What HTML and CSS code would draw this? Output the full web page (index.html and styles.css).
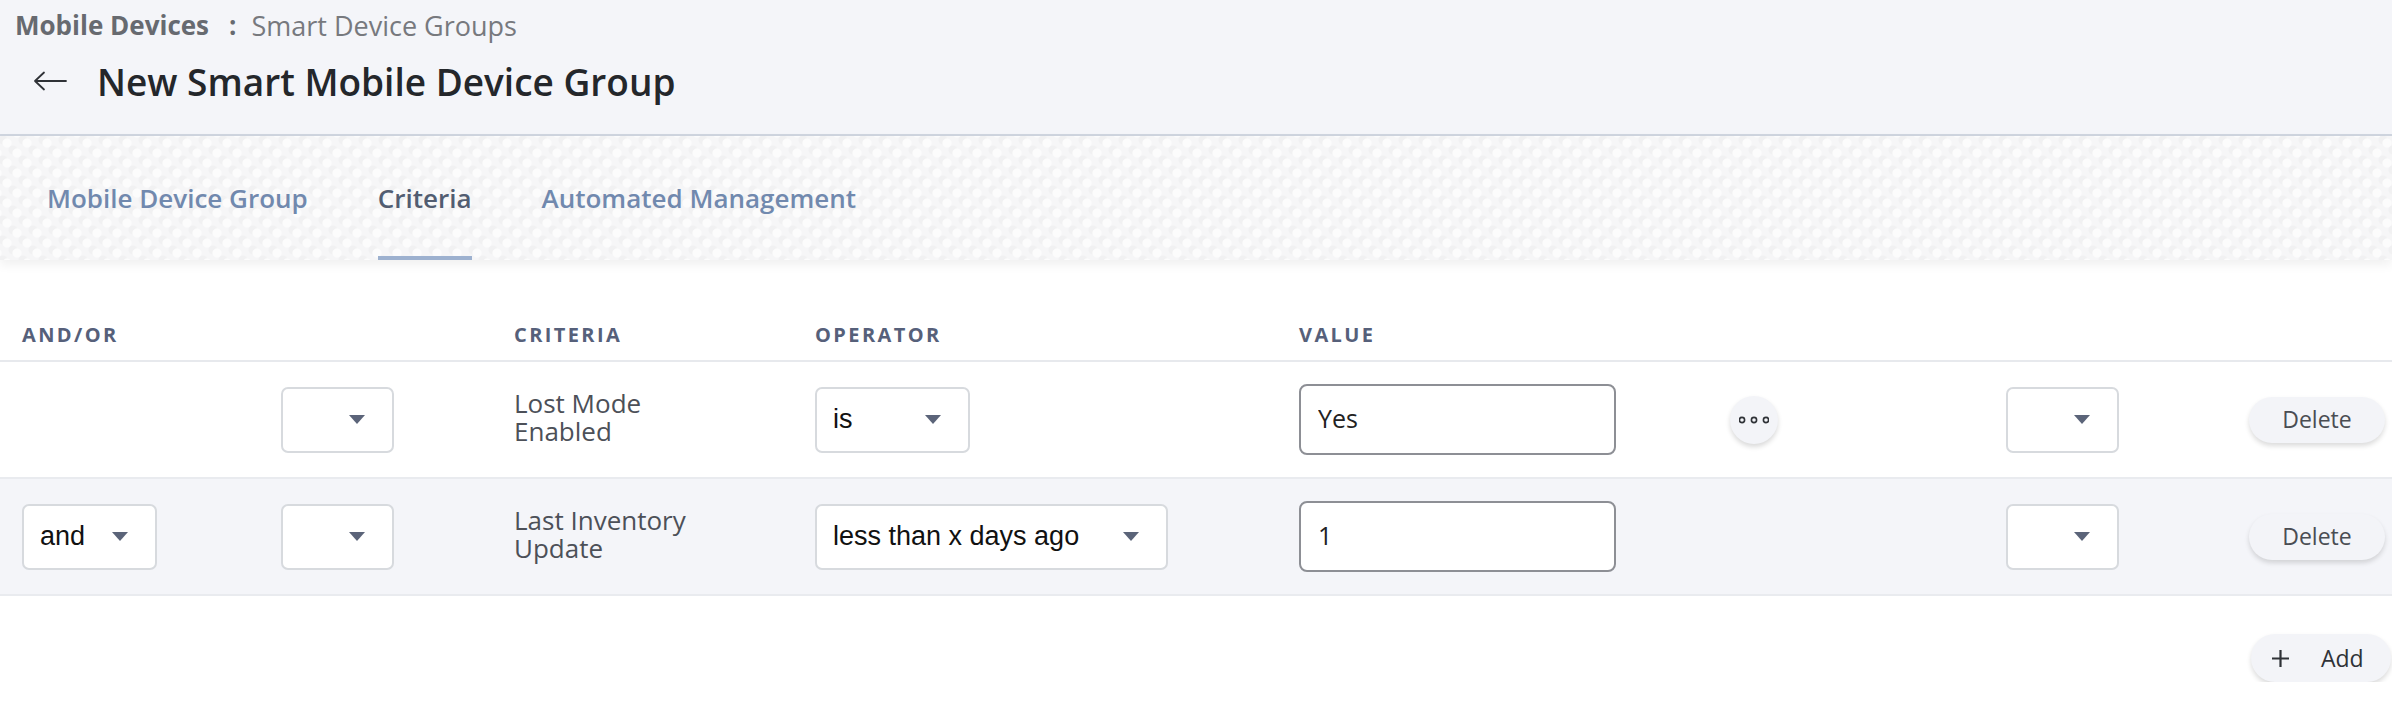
FILE: index.html
```html
<!DOCTYPE html>
<html lang="en">
<head>
    <meta charset="UTF-8">
    <meta name="viewport" content="width=device-width, initial-scale=1.0">
    <title>New Smart Mobile Device Group</title>
    <link rel="stylesheet" href="styles.css">
</head>
<body>
    <header class="page-header">
        <div class="breadcrumb">
            <span class="crumb-parent">Mobile Devices</span>
            <span class="crumb-sep">:</span>
            <span class="crumb-current">Smart Device Groups</span>
        </div>
        <div class="title-row">
            <button class="back-btn" aria-label="Back">
                <svg width="34" height="20" viewBox="0 0 34 20">
                    <path d="M33 10H2M11 1.5L2 10l9 8.5" fill="none" stroke="#2f3237" stroke-width="1.8" stroke-linecap="round" stroke-linejoin="round"/>
                </svg>
            </button>
            <h1>New Smart Mobile Device Group</h1>
        </div>
    </header>

    <nav class="tabs">
        <a href="#" class="tab">Mobile Device Group</a>
        <a href="#" class="tab active">Criteria</a>
        <a href="#" class="tab">Automated Management</a>
    </nav>

    <main class="criteria">
        <div class="criteria-grid criteria-head">
            <div>AND/OR</div>
            <div></div>
            <div>CRITERIA</div>
            <div>OPERATOR</div>
            <div>VALUE</div>
            <div></div>
            <div></div>
            <div></div>
        </div>

        <div class="criteria-grid criteria-row">
            <div></div>
            <div><div class="select select-paren"><span class="select-value"></span><span class="caret"></span></div></div>
            <div class="criteria-name">Lost Mode Enabled</div>
            <div><div class="select select-is"><span class="select-value">is</span><span class="caret"></span></div></div>
            <div><input class="value-input" type="text" value="Yes"></div>
            <div>
                <button class="more-btn" aria-label="More">
                    <svg width="30" height="8" viewBox="0 0 30 8">
                        <circle cx="3" cy="4" r="2.6" fill="none" stroke="#2f3237" stroke-width="1.6"/>
                        <circle cx="15" cy="4" r="2.6" fill="none" stroke="#2f3237" stroke-width="1.6"/>
                        <circle cx="27" cy="4" r="2.6" fill="none" stroke="#2f3237" stroke-width="1.6"/>
                    </svg>
                </button>
            </div>
            <div><div class="select select-paren"><span class="select-value"></span><span class="caret"></span></div></div>
            <div><button class="pill delete-btn">Delete</button></div>
        </div>

        <div class="criteria-grid criteria-row alt">
            <div><div class="select select-andor"><span class="select-value">and</span><span class="caret"></span></div></div>
            <div><div class="select select-paren"><span class="select-value"></span><span class="caret"></span></div></div>
            <div class="criteria-name">Last Inventory Update</div>
            <div><div class="select select-days"><span class="select-value">less than x days ago</span><span class="caret"></span></div></div>
            <div><input class="value-input" type="text" value="1"></div>
            <div></div>
            <div><div class="select select-paren"><span class="select-value"></span><span class="caret"></span></div></div>
            <div><button class="pill delete-btn">Delete</button></div>
        </div>

        <div class="criteria-foot">
            <button class="pill add-btn">
                <svg width="17" height="17" viewBox="0 0 17 17">
                    <path d="M8.5 0v17M0 8.5h17" stroke="#2f3237" stroke-width="2.2"/>
                </svg>
                <span>Add</span>
            </button>
        </div>
    </main>
</body>
</html>
```

FILE: styles.css
```css
* {
    box-sizing: border-box;
}

body {
    margin: 0;
    font-family: 'Open Sans', 'Liberation Sans', sans-serif;
    color: #2f3237;
    background-color: #fff;
    overflow: hidden;
}

button {
    font-family: inherit;
    border: none;
    cursor: pointer;
}

/* header */

.page-header {
    height: 136px;
    padding-left: 15px;
    background-color: #f4f5f9;
    border-bottom: 2px solid #cfd5df;
}

.breadcrumb {
    height: 50px;
    display: flex;
    align-items: center;
    font-size: 26px;
}

.crumb-parent {
    font-weight: 700;
    color: #676a70;
}

.crumb-sep {
    margin: 0 15px 0 20px;
    font-weight: 700;
    color: #676a70;
}

.crumb-current {
    font-size: 27px;
    color: #77797e;
}

.title-row {
    height: 62px;
    display: flex;
    align-items: center;
    padding-left: 18px;
}

.back-btn {
    background: transparent;
    padding: 0;
    display: flex;
    margin-right: 30px;
}

.title-row h1 {
    margin: 0;
    font-size: 37px;
    font-weight: 600;
    color: #24272b;
}

/* tabs */

.tabs {
    position: relative;
    z-index: 1;
    height: 124px;
    display: flex;
    gap: 70px;
    padding-left: 47px;
    background-color: #f6f6f7;
    background-image:
        radial-gradient(circle at 35% 35%, #fcfcfc 0 4px, transparent 5px),
        radial-gradient(circle at 35% 35%, #fcfcfc 0 4px, transparent 5px),
        radial-gradient(circle at 65% 70%, #f1f1f2 0 4px, transparent 5px),
        radial-gradient(circle at 65% 70%, #f1f1f2 0 4px, transparent 5px);
    background-size: 20px 20px;
    background-position: 0 0, 10px 10px, 0 0, 10px 10px;
    box-shadow: 0 5px 10px rgba(0, 0, 0, 0.06);
}

.tab {
    display: flex;
    align-items: center;
    padding-top: 4px;
    border-bottom: 4px solid transparent;
    font-size: 26px;
    font-weight: 600;
    color: #7189ae;
    text-decoration: none;
}

.tab.active {
    color: #525d71;
    border-bottom-color: #9db1cf;
}

/* criteria table */

.criteria {
    padding-top: 50px;
}

.criteria-grid {
    display: grid;
    grid-template-columns: 259px 233px 301px 484px 431px 276px 243px 1fr;
    align-items: center;
    padding-left: 22px;
}

.criteria-head {
    height: 52px;
    padding-bottom: 2px;
    border-bottom: 2px solid #e7e9ed;
    font-size: 20px;
    font-weight: 700;
    letter-spacing: 2.4px;
    color: #56607a;
}

.criteria-row {
    height: 117px;
    border-bottom: 2px solid #e9ebef;
}

.criteria-row.alt {
    background-color: #f4f5f9;
}

.criteria-name {
    max-width: 215px;
    padding-bottom: 5px;
    font-size: 26px;
    line-height: 28px;
    color: #4c5058;
}

.select {
    height: 66px;
    display: flex;
    align-items: center;
    justify-content: space-between;
    padding: 0 27px 0 16px;
    background-color: #fff;
    border: 2px solid #d7dade;
    border-radius: 7px;
    font-family: 'Liberation Sans', Arial, sans-serif;
    font-size: 27px;
    color: #111;
}

.select-paren {
    width: 113px;
}

.select-andor {
    width: 135px;
}

.select-is {
    width: 155px;
}

.select-days {
    width: 353px;
}

.caret {
    width: 0;
    height: 0;
    border-left: 8px solid transparent;
    border-right: 8px solid transparent;
    border-top: 9px solid #5b6479;
}

.value-input {
    display: block;
    width: 317px;
    height: 71px;
    padding: 0 17px 4px;
    border: 2px solid #8d8f95;
    border-radius: 8px;
    font-family: inherit;
    font-size: 25px;
    color: #222;
    background-color: #fff;
}

.more-btn {
    width: 48px;
    height: 48px;
    display: flex;
    align-items: center;
    justify-content: center;
    padding: 0;
    border-radius: 50%;
    background-color: #f3f4f8;
    box-shadow: 0 3px 5px rgba(0, 0, 0, 0.15);
}

.pill {
    background-color: #f3f4f8;
    box-shadow: 0 3px 5px rgba(0, 0, 0, 0.14);
    font-size: 23px;
    color: #4a4d53;
}

.delete-btn {
    width: 136px;
    height: 46px;
    padding-bottom: 3px;
    border-radius: 23px;
}

.criteria-foot {
    display: flex;
    justify-content: flex-end;
    padding: 38px 1px 0 0;
}

.add-btn {
    width: 140px;
    height: 48px;
    display: flex;
    align-items: center;
    gap: 32px;
    padding: 0 0 0 21px;
    border-radius: 24px;
    color: #2f3237;
}
```
